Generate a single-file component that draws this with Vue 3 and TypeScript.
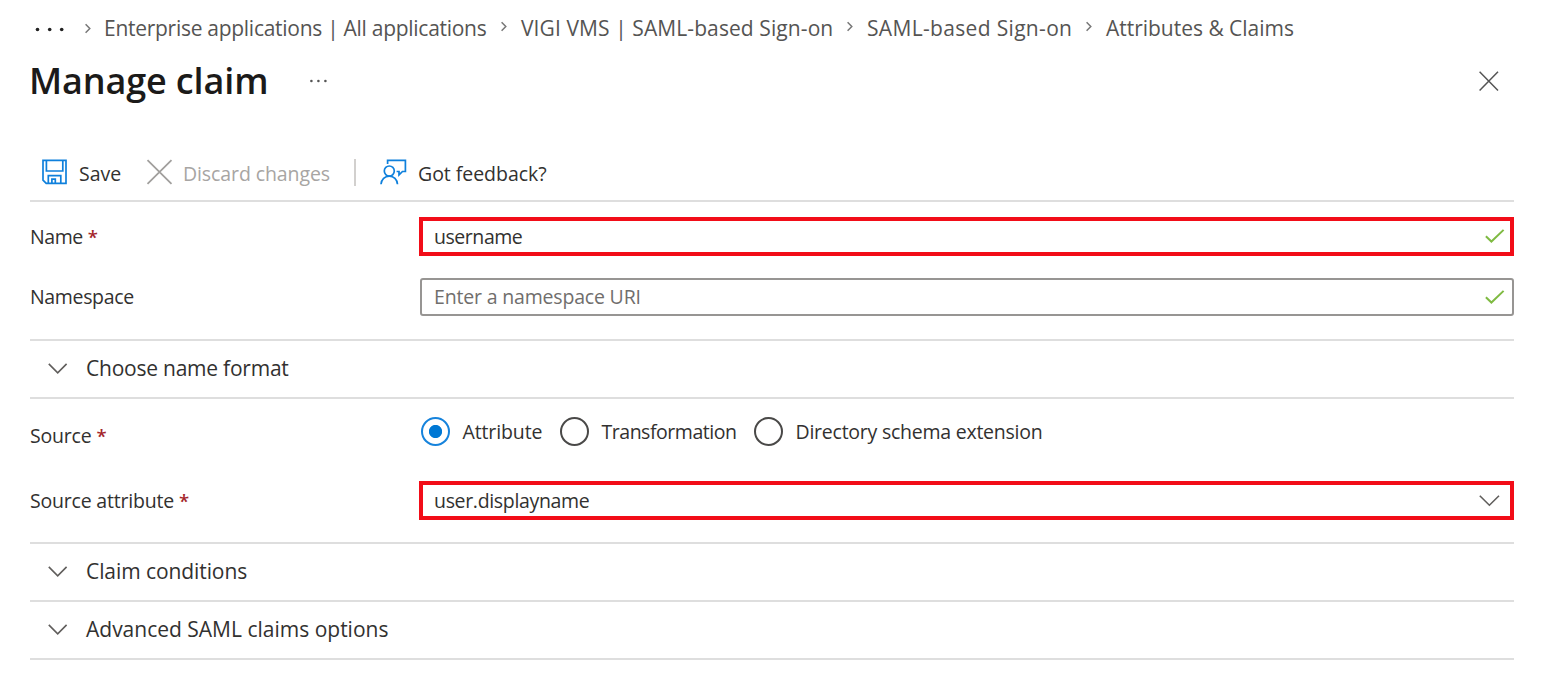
<script setup lang="ts">
import { ref } from 'vue'

interface Crumb { key: string; label: string }
interface SourceOption { key: string; label: string }

const crumbs: Crumb[] = [
  { key: 'apps', label: 'Enterprise applications | All applications' },
  { key: 'vigi', label: 'VIGI VMS | SAML-based Sign-on' },
  { key: 'saml', label: 'SAML-based Sign-on' },
  { key: 'attrs', label: 'Attributes & Claims' },
]
const options: SourceOption[] = [
  { key: 'attribute', label: 'Attribute' },
  { key: 'transformation', label: 'Transformation' },
  { key: 'directory', label: 'Directory schema extension' },
]
const selected = ref('attribute')
</script>

<template>
  <main class="blade">
    <nav class="crumbs">
      <svg class="more" width="30" height="6" viewBox="0 0 30 6">
        <circle cx="3.5" cy="2.5" r="1.8" /><circle cx="15.7" cy="2.5" r="1.8" /><circle cx="27.7" cy="2.5" r="1.8" />
      </svg>
      <template v-for="c in crumbs" :key="c.key">
        <svg class="sep" :class="'sep-' + c.key" width="8" height="11" viewBox="0 0 8 11">
          <path d="M1.6 1.2 5.8 5.5 1.6 9.8" />
        </svg>
        <a class="crumb" :class="'crumb-' + c.key">{{ c.label }}</a>
      </template>
    </nav>

    <header class="title-row">
      <h1>Manage claim</h1>
      <svg class="title-more" width="18" height="4" viewBox="0 0 18 4">
        <circle cx="2.4" cy="2" r="1.3" /><circle cx="9.4" cy="2" r="1.3" /><circle cx="16.4" cy="2" r="1.3" />
      </svg>
      <svg class="close" width="22" height="22" viewBox="0 0 22 22">
        <path d="M1.6 1.8 20 20.6M20 1.8 1.6 20.6" />
      </svg>
    </header>

    <div class="toolbar">
      <svg class="blue icon-save" width="27" height="27" viewBox="0 0 27 27">
        <path d="M2 1.3H25V24.3H5.2L2 21.1ZM5.4 1.3V12H21.8V1.3M7.3 24.3V16.7H19.8V24.3M10.9 24.3V20.2H14.3V24.3" />
      </svg>
      <span class="cmd cmd-save">Save</span>
      <svg class="icon-discard" width="27" height="27" viewBox="0 0 27 27">
        <path d="M1.5 1.2 25.5 24.8M25.5 1.2 1.5 24.8" />
      </svg>
      <span class="cmd cmd-discard">Discard changes</span>
      <i class="divider"></i>
      <svg class="blue icon-feedback" width="28" height="27" viewBox="0 0 28 27">
        <circle cx="10.3" cy="12" r="5" />
        <path d="M2 25.3C2.3 20.5 5.8 17.1 10.3 17.1S18.2 20.5 18.5 25.3M8.6 5.1V1.3H26.4V12.5H23.5L20 15.9V12.5H17.6" />
      </svg>
      <span class="cmd cmd-feedback">Got feedback?</span>
    </div>

    <div class="row row-name">
      <label><span class="l-name">Name</span><b>*</b></label>
      <div class="field marked">
        <span class="value v-username">username</span>
        <svg class="check" width="21" height="15" viewBox="0 0 21 15"><path d="M1.9 7.3 7.4 12.5 19.6 .9" /></svg>
      </div>
    </div>

    <div class="row row-namespace">
      <label><span class="l-namespace">Namespace</span></label>
      <div class="field">
        <span class="value placeholder">Enter a namespace URI</span>
        <svg class="check" width="21" height="15" viewBox="0 0 21 15"><path d="M1.9 7.3 7.4 12.5 19.6 .9" /></svg>
      </div>
    </div>

    <section class="fold fold-format">
      <svg class="chev" width="20" height="12" viewBox="0 0 20 12"><path d="M.8 .9 9.7 9.8 18.6 .9" /></svg>
      <span class="f-format">Choose name format</span>
    </section>

    <div class="row row-source">
      <label><span class="l-source">Source</span><b>*</b></label>
      <div class="radios">
        <div v-for="o in options" :key="o.key" class="radio" :class="[o.key, { on: selected === o.key }]" @click="selected = o.key">
          <i class="ring"></i><span>{{ o.label }}</span>
        </div>
      </div>
    </div>

    <div class="row row-attribute">
      <label><span class="l-attribute">Source attribute</span><b>*</b></label>
      <div class="field marked">
        <span class="value v-display">user.displayname</span>
        <svg class="chev select-chev" width="22" height="12" viewBox="0 0 22 12"><path d="M1.8 .8 11.4 10.2 21 .8" /></svg>
      </div>
    </div>

    <section class="fold fold-conditions">
      <svg class="chev" width="20" height="12" viewBox="0 0 20 12"><path d="M.8 .9 9.7 9.8 18.6 .9" /></svg>
      <span>Claim conditions</span>
    </section>
    <section class="fold fold-advanced">
      <svg class="chev" width="20" height="12" viewBox="0 0 20 12"><path d="M.8 .9 9.7 9.8 18.6 .9" /></svg>
      <span>Advanced SAML claims options</span>
    </section>
  </main>
</template>

<style>
body { margin: 0; background: #fff; overflow: hidden; }
</style>

<style scoped>
.blade {
  box-sizing: border-box;
  width: 1545px;
  height: 692px;
  padding: 0 31px 0 30px;
  background: #fff;
  color: #323130;
  font: 19.5px/28px "Open Sans", "Noto Sans", sans-serif;
  white-space: nowrap;
}
svg { display: block; flex: none; fill: none; overflow: visible; }
path, .icon-feedback circle { stroke-linejoin: miter; }

.crumbs { display: flex; align-items: center; height: 55px; font-size: 21px; color: #555453; }
.more { width: 30px; margin-left: 4px; margin-top: 4px; fill: #222; }
.sep { stroke: #777; stroke-width: 1.5; margin: -2px 13px 0 13px; }
.sep-apps { margin: 2px 12px 0 20px; }
.crumb { flex: none; }
.crumb-apps { width: 383px; letter-spacing: -.28px; }
.crumb-vigi { width: 312px; letter-spacing: .09px; }
.crumb-saml { width: 205px; letter-spacing: .33px; }
.crumb-attrs { letter-spacing: -.02px; }

.title-row { display: flex; align-items: center; height: 52px; }
h1 { width: 279px; margin: 0 0 0 -1px; font-size: 36px; line-height: 50px; font-weight: 600; letter-spacing: -.14px; color: #1b1a19; }
.title-more { margin-left: 1px; fill: #555; }
.close { margin-left: auto; margin-right: 14px; stroke: #555; stroke-width: 1.5; }

.toolbar { display: flex; align-items: center; height: 55px; margin-top: 38px; padding-left: 11px; border-bottom: 2px solid #dedede; }
.cmd { line-height: 28px; margin-top: 3px; }
.blue { stroke: #0f80dc; stroke-width: 1.7; }
.cmd-save { width: 67px; margin-left: 11px; }
.icon-discard { stroke: #a19f9d; stroke-width: 1.8; }
.cmd-discard { width: 171px; margin-left: 10px; letter-spacing: -.1px; color: #a7a5a3; }
.divider { width: 2px; height: 27px; background: #d2d0ce; }
.icon-feedback { margin-left: 23px; }
.cmd-feedback { margin-left: 11px; letter-spacing: -.04px; }

.row { display: flex; align-items: center; }
label { display: flex; width: 389px; gap: 5px; }
label b { font-weight: 600; color: #a4262c; font-size: 18.5px; }
.field { box-sizing: border-box; display: flex; align-items: center; justify-content: space-between; width: 1094px; height: 38px; margin-left: 1px; padding: 0 7px 0 12px; border: 2px solid #979593; border-radius: 3px; }
.marked { width: 1095px; height: 39px; margin-left: 0; padding: 0 5px 0 11px; border: 4px solid #f20d18; border-radius: 0; }
.check { stroke: #7fba42; stroke-width: 2; }
.placeholder { color: #706e6c; letter-spacing: -.18px; }
.row-name { height: 39px; margin-top: 15px; }
.row-namespace { height: 38px; margin-top: 22px; }
.l-name { letter-spacing: -.44px; }
.l-namespace { letter-spacing: -.34px; }
.l-source { letter-spacing: -.2px; }
.l-attribute { letter-spacing: -.2px; }
.v-username { letter-spacing: -.45px; }
.v-display { letter-spacing: -.33px; }

.fold { box-sizing: border-box; display: flex; align-items: center; height: 58px; padding-left: 18px; border-bottom: 2px solid #dedede; font-size: 21px; }
.fold span { margin: -3px 0 0 18px; }
.f-format { letter-spacing: -.23px; }
.chev { stroke: #605e5c; stroke-width: 1.6; }
.fold-format { height: 60px; margin-top: 23px; border-top: 2px solid #dedede; }
.fold-conditions { height: 60px; margin-top: 22px; border-top: 2px solid #dedede; letter-spacing: -.08px; }
.select-chev { margin-right: 5px; }

.row-source { height: 29px; margin-top: 18px; }
.row-source label { margin-top: 9px; }
.radios { display: flex; margin-left: 2px; }
.radio { display: flex; align-items: center; }
.radio.attribute { width: 139px; letter-spacing: -.12px; }
.radio.transformation { width: 194px; letter-spacing: -.47px; }
.radio.directory { letter-spacing: -.24px; }
.ring { box-sizing: border-box; width: 29px; height: 29px; border: 2px solid #4a4948; border-radius: 50%; margin-right: 12.5px; }
.on .ring { border-color: #1683dc; background: radial-gradient(circle, #0078d4 6.2px, transparent 7px); }
.row-attribute { height: 39px; margin-top: 35px; }
</style>
